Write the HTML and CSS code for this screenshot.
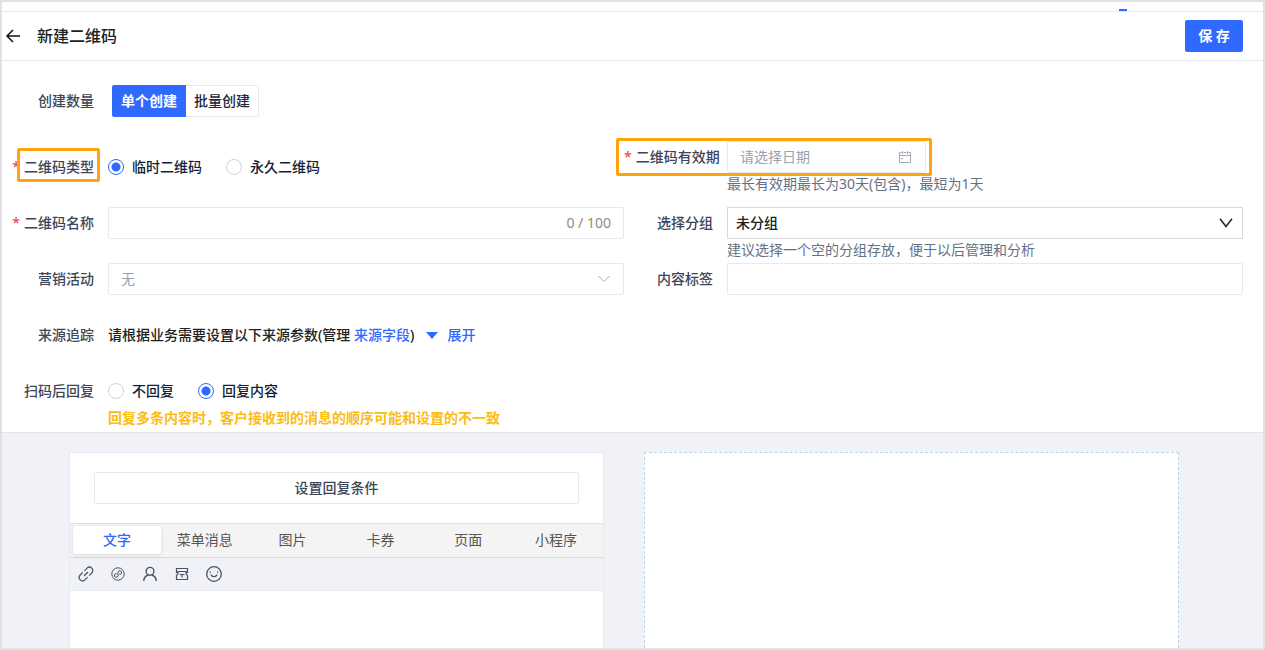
FILE: index.html
```html
<!DOCTYPE html>
<html lang="zh-CN">
<head>
<meta charset="utf-8">
<title>新建二维码</title>
<link rel="stylesheet" href="styles.css">
</head>
<body>
<div class="app">
  <div class="topbar"><span class="topbar-mark"></span></div>
  <header class="header">
    <button class="back" type="button" aria-label="返回">
      <svg width="16" height="16" viewBox="0 0 16 16" fill="none" stroke="currentColor" stroke-width="1.5"><path d="M15 8H2M8 2L2 8l6 6"/></svg>
    </button>
    <h1 class="title">新建二维码</h1>
    <button class="save" type="button">保 存</button>
  </header>

  <form class="form">
    <div class="item item-wide">
      <span class="label" id="count-label">创建数量</span>
      <div class="segment" role="group" aria-labelledby="count-label">
        <button class="segment-btn segment-on" type="button">单个创建</button>
        <button class="segment-btn" type="button">批量创建</button>
      </div>
    </div>

    <div class="item item-type">
      <span class="label required" id="type-label">二维码类型<span class="mark mark-type"></span></span>
      <div class="radios" role="radiogroup" aria-labelledby="type-label">
        <label class="radio"><input type="radio" name="type" checked>临时二维码</label>
        <label class="radio"><input type="radio" name="type">永久二维码</label>
      </div>
    </div>
    <div class="item item-expiry">
      <label class="label required" for="expiry">二维码有效期</label>
      <div>
        <div class="box box-date">
          <input class="input" id="expiry" type="text" placeholder="请选择日期">
          <svg class="date-icon" width="14" height="14" viewBox="0 0 14 14" fill="none" stroke="currentColor"><path d="M3.500 2.500h-2v10h11v-10h-2M5.500 2.500h3M1.500 5.500h11M4.500 1v3M9.500 1v3M3 8.500h2"/></svg>
        </div>
        <p class="help">最长有效期最长为30天(包含)，最短为1天</p>
      </div>
      <span class="mark mark-expiry"></span>
    </div>

    <div class="item">
      <label class="label required" for="name">二维码名称</label>
      <div class="box">
        <input class="input" id="name" type="text" maxlength="100">
        <span class="counter">0 / 100</span>
      </div>
    </div>
    <div class="item">
      <label class="label" for="group">选择分组</label>
      <div>
        <div class="select-wrap">
          <select class="select select-dark" id="group"><option>未分组</option></select>
          <svg class="arrow arrow-dark" width="14" height="10" viewBox="0 0 14 10" fill="none" stroke="currentColor" stroke-width="1.5"><path d="M1 .8l6 7.700l6-7.700"/></svg>
        </div>
        <p class="help">建议选择一个空的分组存放，便于以后管理和分析</p>
      </div>
    </div>

    <div class="item">
      <label class="label" for="campaign">营销活动</label>
      <div class="select-wrap">
        <select class="select select-empty" id="campaign"><option>无</option></select>
        <svg class="arrow" width="14" height="10" viewBox="0 0 14 10" fill="none" stroke="currentColor"><path d="M1.500 2l5.500 5.500l5.500-5.500"/></svg>
      </div>
    </div>
    <div class="item">
      <label class="label" for="tags">内容标签</label>
      <div class="box"><input class="input" id="tags" type="text"></div>
    </div>

    <div class="item item-wide">
      <span class="label">来源追踪</span>
      <div class="source">
        <span>请根据业务需要设置以下来源参数(管理 <a class="link" href="#">来源字段</a>)</span>
        <button class="expand" type="button"><svg width="12" height="7" viewBox="0 0 12 7" fill="currentColor"><path d="M0 0h12L6 7z"/></svg>展开</button>
      </div>
    </div>

    <div class="item item-wide">
      <span class="label" id="reply-label">扫码后回复</span>
      <div>
        <div class="radios" role="radiogroup" aria-labelledby="reply-label">
          <label class="radio"><input type="radio" name="reply">不回复</label>
          <label class="radio"><input type="radio" name="reply" checked>回复内容</label>
        </div>
        <p class="notice">回复多条内容时，客户接收到的消息的顺序可能和设置的不一致</p>
      </div>
    </div>
  </form>

  <main class="workspace">
    <section class="editor">
      <div class="condition"><button class="condition-btn" type="button">设置回复条件</button></div>
      <div class="tabs" role="tablist">
        <button class="tab tab-on" type="button" role="tab" aria-selected="true">文字</button>
        <button class="tab" type="button" role="tab">菜单消息</button>
        <button class="tab" type="button" role="tab">图片</button>
        <button class="tab" type="button" role="tab">卡券</button>
        <button class="tab" type="button" role="tab">页面</button>
        <button class="tab" type="button" role="tab">小程序</button>
      </div>
      <div class="tools">
        <button class="tool" type="button" aria-label="链接"><svg width="16" height="16" viewBox="0 0 16 16" stroke-width="1.200"><path d="M6.400 4.800l2.600-2.600a3.300 3.300 0 0 1 4.800 4.800l-2.600 2.600M9.600 11.200l-2.600 2.600a3.300 3.300 0 0 1-4.800-4.800l2.600-2.600M6 10l4-4"/></svg></button>
        <button class="tool" type="button" aria-label="小程序"><svg width="16" height="16" viewBox="0 0 16 16"><circle cx="8" cy="8" r="6.200"/><path d="M6.700 7.700a1.800 1.800 0 1 0 1.300 2V6.300a1.800 1.800 0 1 1 1.300 2"/></svg></button>
        <button class="tool" type="button" aria-label="联系人"><svg width="16" height="16" viewBox="0 0 16 16" stroke-width="1.400"><circle cx="8" cy="5.300" r="3.900"/><path d="M1.700 15c.2-3 1.800-5 4.500-6M14.300 15c-.2-3-1.800-5-4.500-6"/></svg></button>
        <button class="tool" type="button" aria-label="卡券"><svg width="16" height="16" viewBox="0 0 16 16" stroke-width="1.200"><path d="M3.500 6.500h-1v-4h11v4h-1M4 5.500h8v2l1.500 2v4h-11v-4l1.500-2zM5.500 8.500h5M8 8.500v3"/></svg></button>
        <button class="tool" type="button" aria-label="表情"><svg width="16" height="16" viewBox="0 0 16 16" stroke-width="1.300"><circle cx="8" cy="8" r="7.300"/><path d="M5 8.500c.5 2.700 5.500 2.700 6 0M4.300 5.500v1.200M11.700 5.500v1.200"/></svg></button>
      </div>
      <textarea class="content" aria-label="回复内容"></textarea>
    </section>
    <section class="preview"></section>
  </main>
</div>
</body>
</html>
```
FILE: styles.css
```css
* { box-sizing: border-box; }
body {
  margin: 0;
  background: #fff;
  font: 14px/22px "Noto Sans", "Noto Sans CJK SC", sans-serif;
  color: #3c4658;
}
button, input, select, textarea { font: inherit; color: inherit; }
button { padding: 0; border: 0; background: none; cursor: pointer; }
p, h1 { margin: 0; }
svg { display: block; }

.app {
  display: flex;
  flex-direction: column;
  min-height: 100vh;
  border: 2px solid #e1e1e1;
}
.topbar {
  display: flex;
  justify-content: flex-end;
  align-items: flex-end;
  height: 10px;
  padding-right: 136px;
  border-bottom: 1px solid #e8e9ec;
}
.topbar-mark { width: 8px; height: 2px; background: #3069ff; }
.header {
  display: flex;
  align-items: center;
  height: 49px;
  padding: 0 20px 0 3px;
  border-bottom: 1px solid #e8e9ec;
}
.back { margin-right: 16px; color: #111; }
.title { flex: 1; font-size: 16px; line-height: 24px; font-weight: 500; color: #222; }
.save {
  width: 58px;
  height: 32px;
  border-radius: 2px;
  background: #3069ff;
  color: #fff;
  font-weight: 600;
}

.form {
  display: grid;
  grid-template-columns: 1fr 1fr;
  padding: 24px 20px 0 3px;
  border-bottom: 1px solid #e4e5e8;
}
.item {
  position: relative;
  display: grid;
  grid-template-columns: 103px minmax(0, 1fr);
  align-items: start;
  min-height: 56px;
}
.item-wide { grid-column: 1 / -1; }
.item-type { padding-top: 10px; }
.item-expiry { min-height: 66px; }
.label {
  position: relative;
  padding-right: 14px;
  line-height: 32px;
  font-weight: 500;
  text-align: right;
  white-space: nowrap;
}
.required::before { content: "*"; margin-right: 4px; color: #f0364a; font-weight: 400; }
.item-expiry .label { padding-right: 8px; }
.mark { position: absolute; border: 3px solid #ffa50a; border-radius: 2px; pointer-events: none; }
.mark-type { top: -3px; right: 8px; width: 83px; height: 34px; }
.mark-expiry { top: -3px; left: -8px; width: 316px; height: 38px; }

.segment { display: flex; margin-left: 4px; }
.segment-btn {
  height: 32px;
  padding: 0 8px;
  border: 1px solid #e8e9f0;
  border-left: 0;
  border-radius: 0 2px 2px 0;
  color: #1b2740;
  font-weight: 500;
}
.segment-on {
  padding: 0 9px;
  border: 0;
  border-radius: 2px 0 0 2px;
  background: #3069ff;
  color: #fff;
  font-weight: 600;
}

.radios { display: flex; gap: 24px; }
.radio { display: flex; align-items: center; gap: 8px; height: 32px; color: #131f38; font-weight: 500; }
.radio input {
  appearance: none;
  width: 16px;
  height: 16px;
  margin: 0;
  border: 1px solid #cfd2dc;
  border-radius: 50%;
}
.radio input:checked {
  border-color: #3069ff;
  background: radial-gradient(circle, #3069ff 4px, #fff 5px);
}

.box {
  display: flex;
  align-items: center;
  height: 32px;
  padding: 0 12px;
  border: 1px solid #e8e9f0;
  border-radius: 2px;
  background: #fff;
}
.box-date { width: 199px; }
.input { flex: 1; min-width: 0; height: 22px; padding: 0; border: 0; outline: 0; background: none; }
.input::placeholder { color: #9aa1b2; opacity: 1; }
.date-icon { margin-right: 1px; color: #a2a8b6; }
.counter { color: #8c8c8c; }
.help { color: #667083; }
.select-wrap { position: relative; }
.select {
  display: block;
  appearance: none;
  width: 100%;
  height: 32px;
  padding: 0 32px 0 12px;
  border: 1px solid #e8e9f0;
  border-radius: 2px;
  background: #fff;
}
.select-empty { color: #9aa1b2; }
.select-dark { padding-left: 8px; border-color: #d9d9d9; border-radius: 0; color: #222; font-weight: 500; }
.arrow { position: absolute; top: 11px; right: 13px; color: #a2a8b6; pointer-events: none; }
.arrow-dark { right: 10px; color: #222; }

.source { display: flex; align-items: center; gap: 12px; height: 32px; color: #222; font-weight: 500; }
.link { color: #3069ff; text-decoration: none; }
.expand { display: flex; align-items: center; gap: 9px; color: #3069ff; font-weight: 500; }
.notice { padding-bottom: 3px; color: #fbbc14; font-weight: 600; }

.workspace {
  flex: 1;
  display: grid;
  grid-template-columns: 1fr 1fr;
  gap: 40px;
  padding: 19px 84px 0 67px;
  background: #f0f2f7;
}
.editor {
  display: flex;
  flex-direction: column;
  border: 1px solid #e8eaf0;
  border-bottom: 0;
  background: #fff;
}
.condition { padding: 19px 24px; }
.condition-btn { width: 100%; height: 32px; border: 1px solid #e8e9f0; border-radius: 2px; font-weight: 500; }
.tabs {
  display: grid;
  grid-template-columns: repeat(6, 1fr);
  height: 35px;
  padding: 2px 3px 3px;
  border-top: 1px solid #e0e1e4;
  border-bottom: 1px solid #d8dadf;
  background: #f4f4f4;
}
.tab { border-radius: 3px; line-height: 20px; color: #555; white-space: nowrap; }
.tab-on { background: #fff; color: #3069ff; font-weight: 500; box-shadow: 0 1px 4px #0000001a; }
.tools {
  display: flex;
  align-items: center;
  gap: 16px;
  height: 33px;
  padding: 0 8px;
  border-bottom: 1px solid #e8eaf0;
  background: #f0f2f7;
}
.tool svg { fill: none; stroke: #485366; }
.content { display: block; flex: 1 0 0px; width: 100%; min-height: 56px; padding: 8px; border: 0; outline: 0; resize: none; background: #fff; }
.preview { border: 1px dashed #b9d3ea; border-bottom: 0; background: #fff; }
```
